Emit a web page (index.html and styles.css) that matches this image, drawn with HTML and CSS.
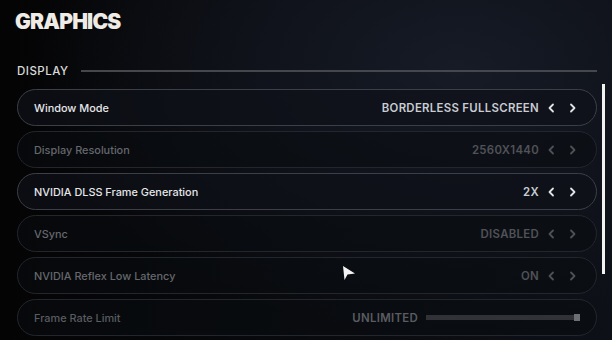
FILE: index.html
```html
<!DOCTYPE html>
<html>
<head>
<meta charset="utf-8">
<link rel="stylesheet" href="styles.css">
</head>
<body>
<div class="page">
  <h1 class="title">GRAPHICS</h1>
  <div class="section-head">
    <span class="section-name">DISPLAY</span>
    <span class="section-line"></span>
  </div>
  <div class="rows">
    <div class="row active">
      <span class="label">Window Mode</span>
      <span class="value">BORDERLESS FULLSCREEN</span>
      <span class="arrows">
        <svg class="chev" viewBox="0 0 8 10"><path d="M6 1.5 L2.5 5 L6 8.5"/></svg>
        <svg class="chev" viewBox="0 0 8 10"><path d="M2 1.5 L5.5 5 L2 8.5"/></svg>
      </span>
    </div>
    <div class="row dim">
      <span class="label">Display Resolution</span>
      <span class="value">2560X1440</span>
      <span class="arrows">
        <svg class="chev" viewBox="0 0 8 10"><path d="M6 1.5 L2.5 5 L6 8.5"/></svg>
        <svg class="chev" viewBox="0 0 8 10"><path d="M2 1.5 L5.5 5 L2 8.5"/></svg>
      </span>
    </div>
    <div class="row active">
      <span class="label">NVIDIA DLSS Frame Generation</span>
      <span class="value">2X</span>
      <span class="arrows">
        <svg class="chev" viewBox="0 0 8 10"><path d="M6 1.5 L2.5 5 L6 8.5"/></svg>
        <svg class="chev" viewBox="0 0 8 10"><path d="M2 1.5 L5.5 5 L2 8.5"/></svg>
      </span>
    </div>
    <div class="row dim">
      <span class="label">VSync</span>
      <span class="value">DISABLED</span>
      <span class="arrows">
        <svg class="chev" viewBox="0 0 8 10"><path d="M6 1.5 L2.5 5 L6 8.5"/></svg>
        <svg class="chev" viewBox="0 0 8 10"><path d="M2 1.5 L5.5 5 L2 8.5"/></svg>
      </span>
    </div>
    <div class="row dim">
      <span class="label">NVIDIA Reflex Low Latency</span>
      <span class="value">ON</span>
      <span class="arrows">
        <svg class="chev" viewBox="0 0 8 10"><path d="M6 1.5 L2.5 5 L6 8.5"/></svg>
        <svg class="chev" viewBox="0 0 8 10"><path d="M2 1.5 L5.5 5 L2 8.5"/></svg>
      </span>
    </div>
    <div class="row dim last">
      <span class="label">Frame Rate Limit</span>
      <span class="value">UNLIMITED</span>
      <span class="slider"><span class="slider-handle"></span></span>
    </div>
  </div>
  <div class="scrollbar"></div>
  <svg class="cursor" viewBox="0 0 14 16"><path d="M1 1 L13 8.5 L5.5 9.5 L2.5 15 Z"/></svg>
</div>
</body>
</html>
```
FILE: styles.css
```css
html, body {
  margin: 0;
  padding: 0;
  height: 100%;
}
body {
  background:
    radial-gradient(ellipse 70% 80% at 75% 20%, #161b26 0%, #10131b 45%, rgba(8,9,12,0) 100%),
    linear-gradient(90deg, #040405 0%, #08090c 40%, #0d1017 100%);
  font-family: "Inter", "Roboto", sans-serif;
  overflow: hidden;
}
.page {
  position: relative;
  width: 612px;
  height: 340px;
  box-sizing: border-box;
  padding: 9px 15px 0 17px;
}
.title {
  margin: 0 0 0 -2px;
  font-family: "Inter", sans-serif;
  font-weight: 900;
  font-size: 21px;
  line-height: 25px;
  color: #efebe5;
  letter-spacing: -0.8px;
}
.section-head {
  display: flex;
  align-items: center;
  margin-top: 30px;
  height: 14px;
}
.section-name {
  font-size: 11.5px;
  font-weight: 500;
  color: #d9d9d9;
  letter-spacing: 0.5px;
}
.section-line {
  flex: 1;
  height: 2px;
  background: #45474c;
  margin-left: 12px;
}
.rows {
  margin-top: 11px;
  display: flex;
  flex-direction: column;
  gap: 5px;
  width: 580px;
}
.row {
  display: flex;
  align-items: center;
  height: 37px;
  box-sizing: border-box;
  border-radius: 19px;
  padding: 0 19px 0 16px;
  border: 1px solid #23262c;
  background: rgba(10, 12, 17, 0.55);
}
.row.active {
  border-color: #3b3f47;
  background: rgba(14, 17, 24, 0.7);
}
.label {
  flex: 1;
  font-size: 10.9px;
  font-weight: 450;
  letter-spacing: 0;
  color: #65676c;
}
.row.active .label {
  color: #e6e6e8;
}
.value {
  font-size: 11.4px;
  font-weight: 600;
  letter-spacing: 0.3px;
  color: #505257;
}
.row.active .value {
  color: #c9ccd2;
}
.arrows {
  display: flex;
  gap: 14px;
  margin-left: 8px;
}
.chev {
  width: 8px;
  height: 10px;
  fill: none;
  stroke: #4f5156;
  stroke-width: 1.8;
  stroke-linecap: round;
  stroke-linejoin: round;
}
.row.active .chev {
  stroke: #e2e3e6;
}
.slider {
  width: 154px;
  height: 5px;
  margin-left: 8px;
  margin-right: -3px;
  background: #303237;
  display: flex;
  justify-content: flex-end;
}
.slider-handle {
  width: 6px;
  height: 7px;
  margin-top: -1px;
  background: #6d6f74;
}
.row.last .label,
.row.last .value {
  color: #5a5c61;
}
.scrollbar {
  position: absolute;
  left: 602px;
  top: 84px;
  width: 3px;
  height: 190px;
  background: #f2f2f2;
}
.cursor {
  position: absolute;
  left: 342px;
  top: 265px;
  width: 14px;
  height: 16px;
  fill: #f4f4f4;
}
```
